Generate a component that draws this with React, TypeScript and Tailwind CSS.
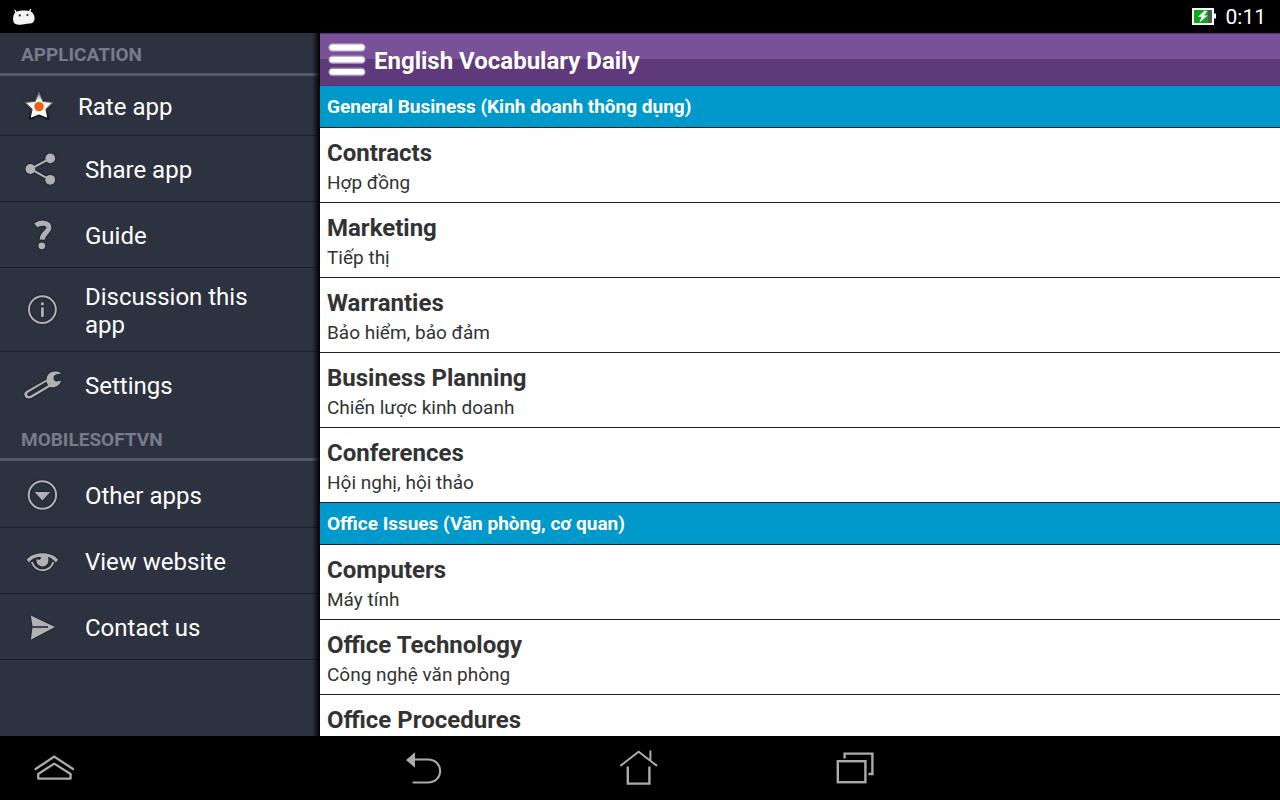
import type { ReactNode } from "react";

const ICON = "#b0b1b5";

type MenuEntry = { label: string; icon: ReactNode; size?: "compact" | "tall"; last?: boolean };

function MenuSvg({ children }: { children: ReactNode }) {
  return (
    <svg
      viewBox="0 0 48 48"
      className="h-12 w-12 shrink-0 drop-shadow-[0_0_1px_#111318]"
      fill="none"
      stroke={ICON}
      aria-hidden="true"
    >
      {children}
    </svg>
  );
}

function StarIcon() {
  return (
    <MenuSvg>
      <defs>
        <linearGradient id="star" x1="0" y1="0" x2="0" y2="1">
          <stop offset="0" stopColor="#8a8a8a" />
          <stop offset="0.3" stopColor="#f0f0f0" />
          <stop offset="1" stopColor="#ffffff" />
        </linearGradient>
        <linearGradient id="rim" x1="0" y1="0" x2="0" y2="1">
          <stop offset="0" stopColor="#6b6d72" />
          <stop offset="0.5" stopColor="#55575c" />
          <stop offset="1" stopColor="#000000" />
        </linearGradient>
      </defs>
      <path
        d="M24 10.6 L28 19.4 L38 20.4 L31 27.4 L33.2 36.8 L24 33 L14.8 36.8 L17 27.4 L10 20.4 L20 19.4 Z"
        fill="url(#star)"
        stroke="url(#rim)"
        strokeWidth="1.2"
        strokeLinejoin="round"
      />
      <circle cx="24" cy="24.6" r="4.7" fill="#e8640c" stroke="none" />
    </MenuSvg>
  );
}

function ShareIcon() {
  return (
    <MenuSvg>
      <path d="M32.2 13.4 L12.5 24 L32.2 34.8" strokeWidth="2" />
      <g fill={ICON} stroke="none">
        <circle cx="12.4" cy="24" r="4.9" />
        <circle cx="32.2" cy="13.4" r="4.9" />
        <circle cx="32.2" cy="34.8" r="4.9" />
      </g>
    </MenuSvg>
  );
}

function HelpIcon() {
  return (
    <MenuSvg>
      <path
        d="M17.8 14.4 C21.4 11.4 31.2 10.6 30.8 17 C30.4 21.6 24.4 22 24.2 28.6"
        strokeWidth="5"
      />
      <circle cx="23.8" cy="34.8" r="3.4" fill={ICON} stroke="none" />
    </MenuSvg>
  );
}

function InfoIcon() {
  return (
    <MenuSvg>
      <circle cx="24.4" cy="23.6" r="13.4" strokeWidth="2" />
      <path d="M24.4 21.4 V30.8" strokeWidth="2.8" />
      <path d="M24.4 16.4 V19.2" strokeWidth="2.8" />
    </MenuSvg>
  );
}

function WrenchIcon() {
  return (
    <MenuSvg>
      <path
        fillRule="evenodd"
        fill={ICON}
        stroke="none"
        d="M28.6 18.4 C28.6 14 32.2 10.6 37 10.6 C40 10.6 42.2 11.2 42.9 12.6 L37.8 13.6 C34.6 15 35 20 38.2 20.4 L43 19.8 C42 24.6 37 27.4 31.8 26 L13.6 36.8 C10.6 38.4 7.6 37.4 6.6 34.8 C5.8 32.6 6.6 31.2 8.4 30 Z M28.2 20.8 L10.2 31.4 C8 33 9.8 36 12.4 34.7 L30.2 24.2 Z"
      />
    </MenuSvg>
  );
}

function MoreIcon() {
  return (
    <MenuSvg>
      <circle cx="24.4" cy="24" r="13.7" strokeWidth="2" />
      <path d="M16.6 21 H32.2 L24.4 29.6 Z" fill={ICON} stroke="none" />
    </MenuSvg>
  );
}

function EyeIcon() {
  return (
    <MenuSvg>
      <path
        d="M8.8 22.8 C14.4 14 34.4 14 40 22.8 L38 25.6 C34.6 21.8 32.4 20.4 30 20 C31.6 26 28.4 29.4 24.4 29.4 C20.2 29.4 17.6 25.8 18.8 22 C20.6 23.4 22.8 22.8 23 20.4 C19 19 14.2 21.6 10.8 25.6 Z"
        fill={ICON}
        stroke="none"
      />
      <path d="M13.8 25 C18 36 31.6 36 35.4 25" strokeWidth="2" />
    </MenuSvg>
  );
}

function SendIcon() {
  return (
    <MenuSvg>
      <path d="M12.8 12.4 L37 24 L12.8 36.8 L14.6 24 Z" fill={ICON} stroke="none" />
      <path d="M14.4 24 H30" stroke="#23262f" strokeWidth="1.6" />
    </MenuSvg>
  );
}

const application: MenuEntry[] = [
  { label: "Rate app", icon: <StarIcon />, size: "compact" },
  { label: "Share app", icon: <ShareIcon /> },
  { label: "Guide", icon: <HelpIcon /> },
  { label: "Discussion this app", icon: <InfoIcon />, size: "tall" },
  { label: "Settings", icon: <WrenchIcon />, last: true },
];

const vendor: MenuEntry[] = [
  { label: "Other apps", icon: <MoreIcon /> },
  { label: "View website", icon: <EyeIcon /> },
  { label: "Contact us", icon: <SendIcon /> },
];

function MenuGroup({ title, entries }: { title: string; entries: MenuEntry[] }) {
  return (
    <section>
      <h2 className="mb-px flex h-[43px] items-center border-b-3 border-[#565b67] pt-1 pl-[21px] text-[19px] font-bold text-[#767c8b]">
        {title}
      </h2>
      <ul>
        {entries.map((e) => (
          <li key={e.label} className={e.last ? "border-b border-transparent" : "border-b border-[#1d2026]"}>
            <button
              type="button"
              className={
                e.size === "compact"
                  ? "flex h-[58px] w-full items-center gap-[15px] pr-12 pl-[15px] text-left"
                  : e.size === "tall"
                    ? "flex min-h-[83px] w-full items-center gap-[19px] pr-12 pl-[18px] text-left"
                    : "flex min-h-[65px] w-full items-center gap-[19px] pr-12 pl-[18px] text-left"
              }
            >
              {e.icon}
              <span className="pt-0.5 text-2xl leading-7 text-white">{e.label}</span>
            </button>
          </li>
        ))}
      </ul>
    </section>
  );
}

type Lesson = { name: string; translation?: string };

const lessons: { title: string; items: Lesson[] }[] = [
  {
    title: "General Business (Kinh doanh thông dụng)",
    items: [
      { name: "Contracts", translation: "Hợp đồng" },
      { name: "Marketing", translation: "Tiếp thị" },
      { name: "Warranties", translation: "Bảo hiểm, bảo đảm" },
      { name: "Business Planning", translation: "Chiến lược kinh doanh" },
      { name: "Conferences", translation: "Hội nghị, hội thảo" },
    ],
  },
  {
    title: "Office Issues (Văn phòng, cơ quan)",
    items: [
      { name: "Computers", translation: "Máy tính" },
      { name: "Office Technology", translation: "Công nghệ văn phòng" },
      { name: "Office Procedures" },
    ],
  },
];

function StatusBar() {
  return (
    <div className="flex h-[33px] shrink-0 items-center justify-between bg-black pr-[14px] pl-3">
      <svg viewBox="0 0 24 18" className="h-[18px] w-6" aria-hidden="true">
        <path d="M4.6 5.2 L3 2.4 M16.8 4.6 L18.6 1.4" stroke="#f4f4f4" strokeWidth="1.3" strokeLinecap="round" />
        <path
          d="M3.2 4.4 C6 2.2 14.6 2 18.6 3.2 C22.6 5.4 24 11.4 21 14.4 C19.6 15.8 16 15 13.4 16 C10 17 5.6 17.2 3 15.8 C0.4 13.8 0.4 7.4 3.2 4.4 Z"
          fill="#f4f4f4"
        />
        <circle cx="7.8" cy="7.4" r="1.1" fill="#222" />
        <circle cx="15.4" cy="7" r="1.1" fill="#222" />
      </svg>
      <div className="flex items-center gap-2.5">
        <svg viewBox="0 0 24 17" className="h-[17px] w-6" aria-hidden="true">
          <rect x="0" y="0" width="22" height="17" fill="#fff" />
          <rect x="22" y="5.5" width="2.4" height="5" fill="#fff" />
          <rect x="2" y="2" width="14" height="13" fill="#0ca51c" />
          <rect x="16" y="2" width="4" height="13" fill="#555" />
          <path d="M12.6 2.4 L6 8.8 H9.6 L7.4 14.4 L15.8 7.6 H12 L15.4 3.2 Z" fill="#fff" />
        </svg>
        <time className="text-[21px] leading-8 text-white">0:11</time>
      </div>
    </div>
  );
}

function NavIcon({ children }: { children: ReactNode }) {
  return (
    <svg viewBox="0 0 48 48" className="h-12 w-12" fill="none" stroke="#ababab" strokeWidth="2" aria-hidden="true">
      {children}
    </svg>
  );
}

function NavBar() {
  return (
    <nav className="grid h-16 shrink-0 grid-cols-[1fr_auto_1fr] items-center bg-black">
      <div className="pl-[30px]">
        <button type="button" aria-label="Expand" className="block">
          <NavIcon>
            <path d="M5.6 25 L24.2 12.6 L43 25" strokeWidth="2.3" strokeLinecap="round" />
            <path d="M8.2 30 L24.2 19.6 L40.6 30 V34.6 H8.2 Z" strokeWidth="2.3" strokeLinejoin="round" />
          </NavIcon>
        </button>
      </div>
      <div className="grid grid-cols-[215px_215px_215px] justify-items-center">
        <button type="button" aria-label="Back">
          <NavIcon>
            <path d="M13 15.6 H27 C34.4 15.6 39.2 21 39.2 27 C39.2 33 34.4 38.4 27 38.4 H12.4" strokeLinecap="round" />
            <path d="M5 16 L14 8.2 V23.8 Z" fill="#ababab" stroke="none" />
          </NavIcon>
        </button>
        <button type="button" aria-label="Home">
          <NavIcon>
            <path d="M5 21.4 L22.6 7.8 L40.4 21.4 M34.4 16.4 V7.2" strokeLinecap="round" />
            <path d="M11.8 23.4 V39.6 H33.4 V23.4" strokeWidth="2.4" strokeLinecap="round" />
          </NavIcon>
        </button>
        <button type="button" aria-label="Recent apps">
          <NavIcon>
            <rect x="6.8" y="17.2" width="27.6" height="21" strokeWidth="2.4" />
            <path d="M13.6 14.4 V9.6 H41.4 V30 H37.4" strokeWidth="2.4" />
          </NavIcon>
        </button>
      </div>
    </nav>
  );
}

export default function App() {
  return (
    <div className="flex h-screen flex-col overflow-hidden bg-black font-[Roboto,'Noto_Sans',sans-serif]">
      <StatusBar />
      <div className="flex min-h-0 flex-1">
        <aside className="relative w-1/4 overflow-hidden bg-[#2d3240]">
          <MenuGroup title="APPLICATION" entries={application} />
          <MenuGroup title="MOBILESOFTVN" entries={vendor} />
          <div className="pointer-events-none absolute inset-y-0 right-0 w-2 bg-linear-to-r from-transparent to-black" />
        </aside>
        <main className="flex min-w-0 flex-1 flex-col overflow-hidden bg-white">
          <header className="flex h-[53px] shrink-0 items-center gap-2 border-y border-[#59337a] bg-linear-to-b from-[#7b5299] from-0% via-[#775097] via-50% to-[#5e397c] to-50% pl-2">
            <button type="button" aria-label="Menu">
              <svg viewBox="0 0 38 36" className="h-9 w-[38px]" aria-hidden="true">
                <g fill="#fff" fillOpacity="0.4">
                  <rect x="0.4" y="1.2" width="37.2" height="8.6" rx="4.3" />
                  <rect x="0.4" y="13.4" width="37.2" height="8.6" rx="4.3" />
                  <rect x="0.4" y="25.6" width="37.2" height="8.6" rx="4.3" />
                </g>
                <g fill="#fff">
                  <rect x="1.4" y="2.6" width="35.2" height="5.8" rx="2.9" />
                  <rect x="1.4" y="14.8" width="35.2" height="5.8" rx="2.9" />
                  <rect x="1.4" y="27" width="35.2" height="5.8" rx="2.9" />
                </g>
              </svg>
            </button>
            <h1 className="pt-0.5 text-2xl font-bold text-white">English Vocabulary Daily</h1>
          </header>
          <div className="min-h-0 flex-1 overflow-hidden text-[#333333]">
            {lessons.map((group) => (
              <section key={group.title}>
                <h2 className="flex h-[42px] items-center border-b border-[#222] bg-[#0099cc] pt-px pl-[7px] text-[19px] font-bold text-white">
                  {group.title}
                </h2>
                <ul>
                  {group.items.map(({ name, translation }) => (
                    <li key={name} className="border-b border-[#222]">
                      <a href="#" className="flex h-[74px] flex-col pt-[11px] pl-[7px]">
                        <span className="text-2xl leading-7 font-bold">{name}</span>
                        {translation && <span className="pt-1 text-[19px] leading-6">{translation}</span>}
                      </a>
                    </li>
                  ))}
                </ul>
              </section>
            ))}
          </div>
        </main>
      </div>
      <NavBar />
    </div>
  );
}
